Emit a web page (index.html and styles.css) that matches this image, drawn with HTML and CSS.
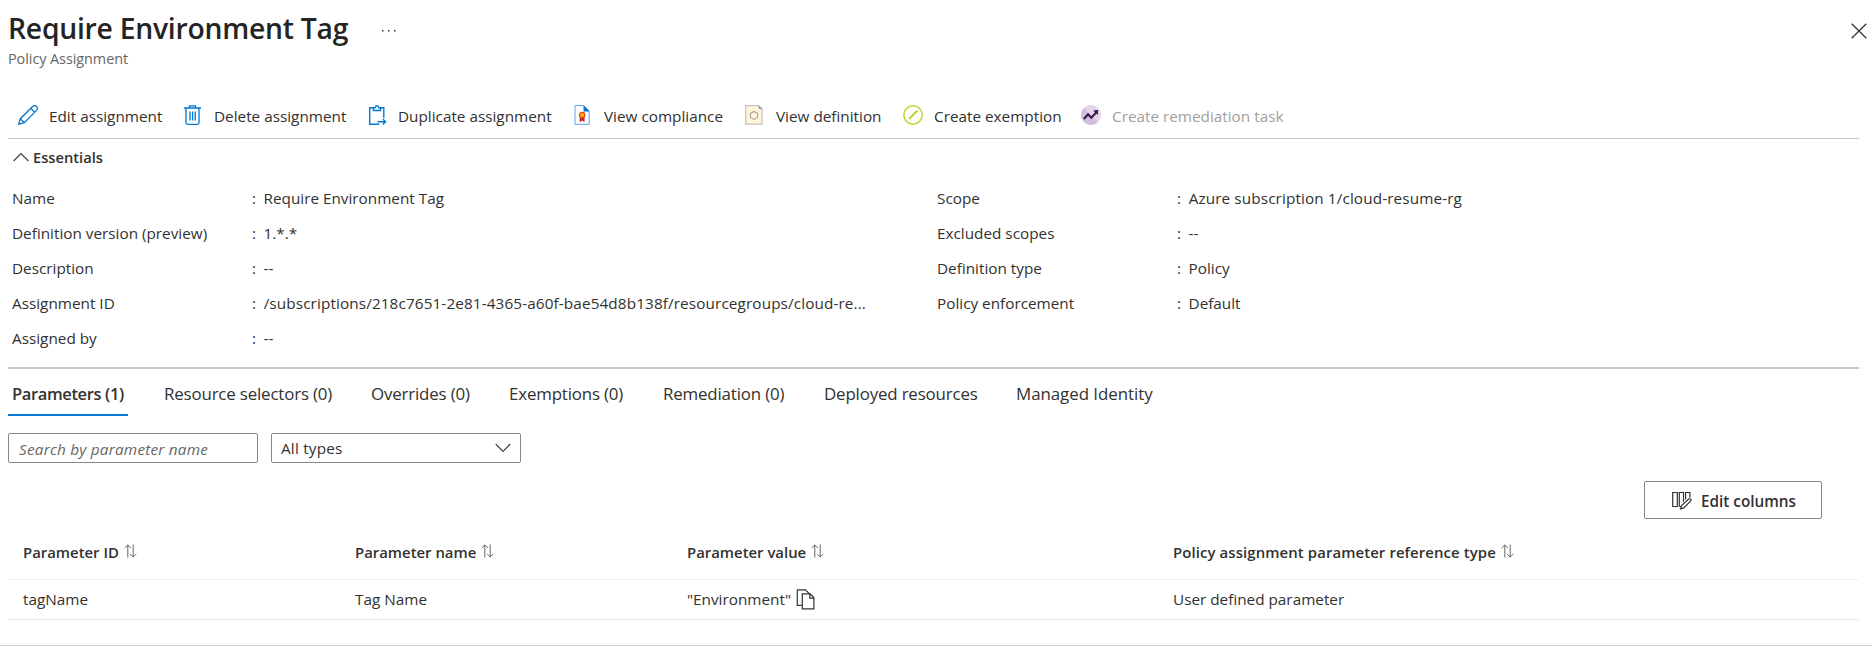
FILE: index.html
```html
<!DOCTYPE html>
<html lang="en">
<head>
<meta charset="utf-8">
<title>Require Environment Tag</title>
<link rel="stylesheet" href="styles.css">
</head>
<body>
<div class="blade">
  <header class="header">
    <div class="title-row">
      <h1 class="title">Require Environment Tag</h1>
      <svg class="more" width="16" height="4" viewBox="0 0 16 4"><path d="M1 1h1.500v1.500H1zM7 1h1.500v1.500H7zM13 1h1.500v1.500H13z" fill="#333"/></svg>
      <svg class="close" width="16" height="16" viewBox="0 0 16 16"><path d="M.7.7l14.600 14.600M15.300.7L.7 15.300" stroke="#333" stroke-width="1.300" fill="none"/></svg>
    </div>
    <div class="subtitle">Policy Assignment</div>
  </header>

  <nav class="toolbar">
    <a class="command"><svg class="icon" viewBox="0 0 20 20" fill="none" stroke="#0078d4" stroke-width="1.300"><path d="M.8 19.200l1.500-5.500L14.600 1.500a2.600 2.600 0 0 1 3.900 3.900L6.300 17.700zM2.300 13.700l4 4M12.800 3.300l3.900 3.900"/></svg><span>Edit assignment</span></a>
    <a class="command"><svg class="icon" viewBox="0 0 20 20" fill="none" stroke="#0078d4" stroke-width="1.300"><path d="M1 3h17M6.500 3V.8h6V3M3 3v14.800q0 1.500 1.500 1.500h10q1.500 0 1.500-1.500V3M7 6.500v9M9.600 6.500v9M12.200 6.500v9"/></svg><span>Delete assignment</span></a>
    <a class="command"><svg class="icon" viewBox="0 0 20 20" fill="none" stroke="#0078d4" stroke-width="1.400"><path d="M6.500 2.700H2.700v16.500h9.500M13 2.700h3.800V13M6.300 2.700v2.800h7.300V2.700h-1.800Q11.600.7 9.900.7T8 2.700zM10.500 16.700h8M15.800 13.900l2.800 2.800-2.800 2.800"/></svg><span>Duplicate assignment</span></a>
    <a class="command"><svg class="icon" viewBox="0 0 20 20"><path d="M2 .6h8.800l5.400 5.500v13.200H2z" fill="#fff" stroke="#5ea0ef"/><path d="M10.500.2v6.200h6.200z" fill="#0078d4"/><path d="M6.700 11h4.800v6.200l-2.400-1.600-2.400 1.600z" fill="#c4262e"/><circle cx="9.100" cy="10" r="2.700" fill="#ffb900" stroke="#e3421f" stroke-width="1.200"/></svg><span>View compliance</span></a>
    <a class="command"><svg class="icon" viewBox="0 0 20 20"><path d="M.7.7h13L17 4v15.200H.7z" fill="#fff4d9" stroke="#c3c3c3" stroke-width="1.200"/><path d="M13.700.4V4h3.600z" fill="#9a9a9a"/><path d="M9 6.400l3.500 2v4l-3.500 2-3.500-2v-4z" fill="none" stroke="#a6a6a0" stroke-width="1.100"/></svg><span>View definition</span></a>
    <a class="command"><svg class="icon" viewBox="0 0 20 20" fill="none"><circle cx="10" cy="10" r="9.200" stroke="#b4d62a" stroke-width="1.400"/><path d="M6 14l8.500-8.500" stroke="#b4d62a" stroke-width="1.800"/></svg><span>Create exemption</span></a>
    <a class="command disabled"><svg class="icon" viewBox="0 0 20 20" fill="none"><circle cx="10" cy="10" r="10" fill="#e4d5e9"/><path d="M10 10L3 3A10 10 0 0 0 10 20 10 10 0 0 0 17 17z" fill="#d3bedc"/><path d="M2.800 14l4.300-4.700 3.200 3.500 5.500-6" stroke="#37174a" stroke-width="2"/><path d="M12.200 5.500l5-.6-.5 5z" fill="#37174a"/></svg><span>Create remediation task</span></a>
  </nav>

  <section class="essentials">
    <div class="essentials-head"><svg width="16" height="10" viewBox="0 0 16 10"><path d="M.6 9L8 1.500 15.400 9" fill="none" stroke="#444" stroke-width="1.200"/></svg><span>Essentials</span></div>
    <div class="facts">
      <dl class="fact-list">
        <dt>Name</dt><dd>Require Environment Tag</dd>
        <dt>Definition version (preview)</dt><dd>1.*.*</dd>
        <dt>Description</dt><dd>--</dd>
        <dt>Assignment ID</dt><dd class="path">/subscriptions/218c7651-2e81-4365-a60f-bae54d8b138f/resourcegroups/cloud-re...</dd>
        <dt>Assigned by</dt><dd>--</dd>
      </dl>
      <dl class="fact-list">
        <dt>Scope</dt><dd class="path">Azure subscription 1/cloud-resume-rg</dd>
        <dt>Excluded scopes</dt><dd>--</dd>
        <dt>Definition type</dt><dd>Policy</dd>
        <dt>Policy enforcement</dt><dd>Default</dd>
      </dl>
    </div>
  </section>

  <nav class="tabs">
    <a class="tab active">Parameters (1)</a>
    <a class="tab">Resource selectors (0)</a>
    <a class="tab">Overrides (0)</a>
    <a class="tab">Exemptions (0)</a>
    <a class="tab">Remediation (0)</a>
    <a class="tab">Deployed resources</a>
    <a class="tab">Managed Identity</a>
  </nav>

  <div class="filters">
    <div class="field search">Search by parameter name</div>
    <div class="field select"><span>All types</span><svg width="16" height="10" viewBox="0 0 16 10"><path d="M.7 1L8 8.500 15.300 1" fill="none" stroke="#444" stroke-width="1.200"/></svg></div>
  </div>

  <div class="actions">
    <div class="button"><svg width="20" height="19" viewBox="0 0 20 19" fill="none" stroke="#333" stroke-width="1.200"><path d="M.7 1.500h4.600v14H.7zM7.300 15.500v-14h4.200v9.300M7.300 15.500h1.800M13.600 8.500v-7h4.300v5"/><path d="M8.600 17.900l.9-3.300 7.300-6.500q1.200-.7 1.900 0t0 1.900l-6.900 6.900z"/></svg><span>Edit columns</span></div>
  </div>

  <div class="table">
    <div class="row head">
      <div>Parameter ID<svg class="sort" viewBox="0 0 13 14"><path d="M3.800 13.500V1M.7 4l3.100-3 3.100 3M9.200.5V13M6.100 10l3.100 3 3.100-3"/></svg></div>
      <div>Parameter name<svg class="sort" viewBox="0 0 13 14"><path d="M3.800 13.500V1M.7 4l3.100-3 3.100 3M9.200.5V13M6.100 10l3.100 3 3.100-3"/></svg></div>
      <div>Parameter value<svg class="sort" viewBox="0 0 13 14"><path d="M3.800 13.500V1M.7 4l3.100-3 3.100 3M9.200.5V13M6.100 10l3.100 3 3.100-3"/></svg></div>
      <div class="wide">Policy assignment parameter reference type<svg class="sort" viewBox="0 0 13 14"><path d="M3.800 13.500V1M.7 4l3.100-3 3.100 3M9.200.5V13M6.100 10l3.100 3 3.100-3"/></svg></div>
    </div>
    <div class="row">
      <div>tagName</div>
      <div>Tag Name</div>
      <div>"Environment"<svg class="copy" width="19" height="21" viewBox="0 0 19 21" fill="none" stroke="#333" stroke-width="1.200"><path d="M5.500 16.300H1.300V.9h8.200l3.800 3.700M6.300 4.900h8l3.600 3.900v11.100H6.300zM13.800 4.900v4.300h4"/></svg></div>
      <div>User defined parameter</div>
    </div>
  </div>
</div>
</body>
</html>
```
FILE: styles.css
```css
body {
  margin: 0;
  background: #fff;
  color: #323130;
  font: 15.300px "Open Sans", "Noto Sans", sans-serif;
  white-space: nowrap;
}

.blade {
  box-sizing: border-box;
  height: 646px;
  padding: 8px 13px 0 8px;
  border-bottom: 1px solid #d2d2d2;
}

.title-row {
  display: flex;
  align-items: center;
  height: 40px;
}

.title {
  width: 373px;
  margin: 0;
  color: #242424;
  font-size: 28.300px;
  font-weight: 600;
  line-height: 40px;
  letter-spacing: -0.25px;
}

.more { margin-top: 5px; }
.close { margin: 5px -8px 0 auto; }

.subtitle {
  padding-top: 1px;
  color: #666;
  font-size: 14.400px;
  line-height: 20px;
  letter-spacing: -0.05px;
}

.toolbar {
  display: grid;
  grid-template-columns: 165px 184px 206px 172px 158px 178px 1fr;
  height: 44px;
  margin-top: 25px;
  padding-left: 10px;
  border-bottom: 1px solid #c8c8c8;
}

.command {
  display: flex;
  align-items: center;
  gap: 11px;
}

.icon {
  width: 20px;
  height: 20px;
  margin-top: -2px;
}

.disabled { color: #a19f9d; }

.essentials-head {
  display: flex;
  align-items: center;
  gap: 4px;
  height: 20px;
  margin-top: 8px;
  padding-left: 5px;
  font-size: 14.700px;
  font-weight: 600;
}

.facts {
  display: grid;
  grid-template-columns: 925px 1fr;
  box-sizing: border-box;
  height: 186px;
  margin-bottom: 14px;
  padding: 14px 0 0 4px;
}

.fact-list {
  display: grid;
  grid-template-columns: 240px 1fr;
  grid-auto-rows: 35px;
  margin: 0;
  line-height: 35px;
}

.fact-list dd {
  display: flex;
  gap: 7.500px;
  margin: 0;
}

.fact-list dd::before { content: ":"; }
.fact-list .path { letter-spacing: 0.115px; }

.tabs {
  display: grid;
  grid-template-columns: 153px 207px 138px 154px 161px 192px 1fr;
  justify-items: start;
  border-top: 2px solid #c8c8c8;
}

.tab {
  padding: 4px 3px 0;
  border-bottom: 2px solid transparent;
  font-size: 16.900px;
  line-height: 41px;
  letter-spacing: -0.170px;
}

.tab.active {
  box-sizing: border-box;
  width: 120px;
  padding-left: 4px;
  border-color: #0078d4;
  font-size: 16.500px;
  font-weight: 600;
  letter-spacing: -0.370px;
}

.tab:last-child { letter-spacing: -0.050px; }

.filters {
  display: flex;
  gap: 13px;
  margin-top: 17px;
}

.field {
  box-sizing: border-box;
  width: 250px;
  height: 30px;
  padding: 0 9px;
  border: 1px solid #8a8886;
  border-radius: 2px;
  line-height: 29px;
}

.search {
  padding: 1px 0 0 10px;
  color: #666;
  font-style: italic;
  letter-spacing: 0.220px;
}

.select {
  display: flex;
  align-items: center;
  justify-content: space-between;
  letter-spacing: 0.200px;
}

.actions {
  display: flex;
  justify-content: flex-end;
  margin: 18px 37px 0 0;
}

.button {
  display: flex;
  box-sizing: border-box;
  align-items: center;
  gap: 9px;
  width: 178px;
  height: 38px;
  padding: 1px 0 0 27px;
  border: 1px solid #8a8886;
  border-radius: 2px;
  font-weight: 600;
}

.table { padding-top: 6px; }

.row {
  display: grid;
  grid-template-columns: 332px 332px 486px 1fr;
  height: 39px;
  padding-left: 15px;
  border-bottom: 1px solid #e8e8e8;
}

.row > div {
  display: flex;
  align-items: center;
  padding-bottom: 1px;
}

.row.head {
  height: 54px;
  border-color: #f0f0f0;
  font-size: 14.900px;
  font-weight: 600;
}

.row.head > div { padding-bottom: 0; }
.row.head > .wide { letter-spacing: 0.110px; }

.sort {
  width: 13px;
  height: 14px;
  margin: -2px 0 0 5px;
  fill: none;
  stroke: #666;
  stroke-width: 1;
}

.copy { margin: 1px 0 0 5px; }
```
